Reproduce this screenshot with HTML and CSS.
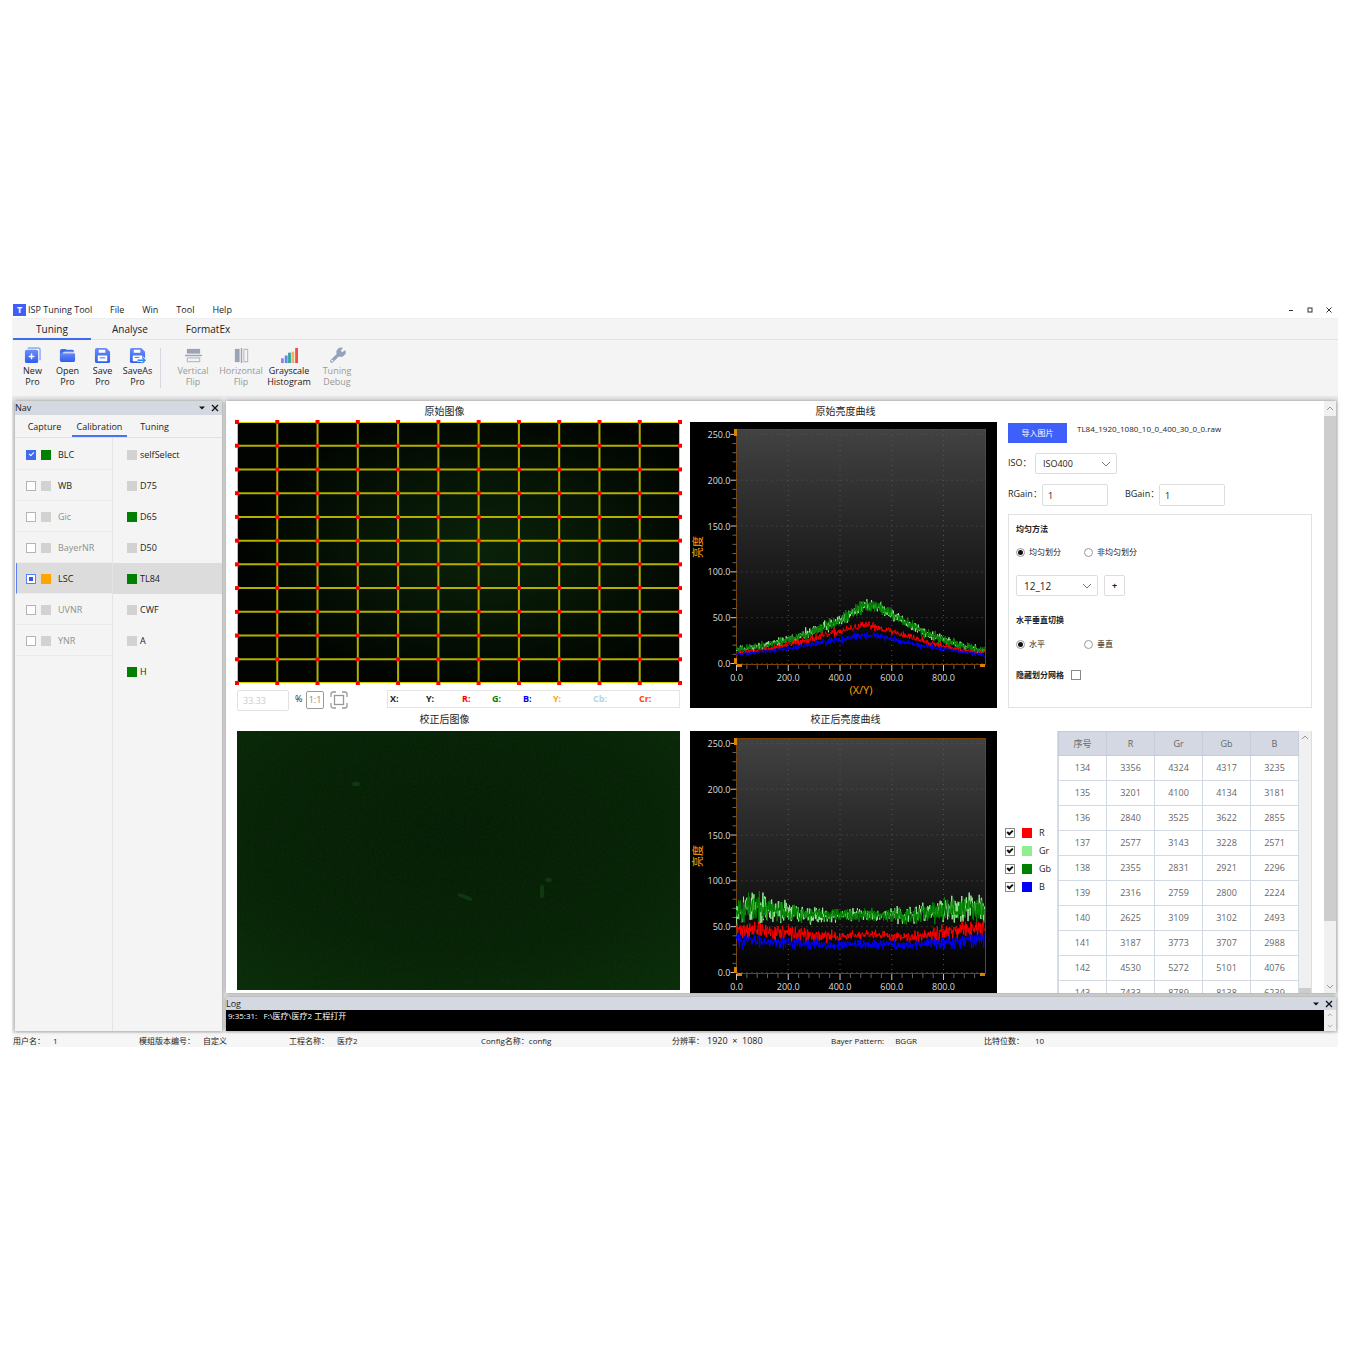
FILE: index.html
```html
<!DOCTYPE html>
<html lang="zh-CN">
<head>
<meta charset="utf-8">
<title>ISP Tuning Tool</title>
<link rel="stylesheet" href="styles.css">
</head>
<body>
<div class="app">
  <header class="titlebar">
    <span class="logo">T</span>
    <span class="app-name">ISP Tuning Tool</span>
    <nav class="menu">
      <a href="#file">File</a><a href="#win">Win</a><a href="#tool">Tool</a><a href="#help">Help</a>
    </nav>
    <div class="window-controls">
      <button type="button" aria-label="Minimize"><svg width="8" height="8" viewBox="0 0 8 8"><path d="M2 4.500h4" stroke="#333"/></svg></button>
      <button type="button" aria-label="Maximize"><svg width="8" height="8" viewBox="0 0 8 8"><rect x="2" y="2" width="4" height="4" fill="none" stroke="#333"/></svg></button>
      <button type="button" aria-label="Close"><svg width="8" height="8" viewBox="0 0 8 8"><path d="M1.500 1.500l5 5M6.500 1.500l-5 5" stroke="#333"/></svg></button>
    </div>
  </header>

  <nav class="ribbon-tabs">
    <a href="#tuning" class="active">Tuning</a><a href="#analyse">Analyse</a><a href="#formatex">FormatEx</a>
  </nav>

  <div class="toolbar">
    <button type="button" class="tool">
      <svg viewBox="0 0 18 18"><defs><linearGradient id="btn-fill" x1="0" x2="0" y1="0" y2="1"><stop offset="0" stop-color="#6a8ef6"/><stop offset="1" stop-color="#2f5cee"/></linearGradient></defs><path d="M4 1h11a2 2 0 0 1 2 2v11" fill="none" stroke="#8ea7f8" stroke-width="1.500"/><rect x="1" y="3" width="14" height="14" rx="2" fill="url(#btn-fill)"/><path d="M8 7v6M5 10h6" stroke="#fff" stroke-width="1.500"/></svg>
      New<br>Pro</button>
    <button type="button" class="tool">
      <svg viewBox="0 0 18 18"><path d="M1 14V4a2 2 0 0 1 2-2h4l1 1h6a2 2 0 0 1 2 2H6a2 2 0 0 0-2 2v8z" fill="#3f6bf0"/><path d="M5 6h10a2 2 0 0 1 2 2v6a2 2 0 0 1-2 2H3a2 2 0 0 1-2-2V9a3 3 0 0 1 4-3z" fill="url(#btn-fill)"/><path d="M4 6.500h12" stroke="#b9c9fb"/></svg>
      Open<br>Pro</button>
    <button type="button" class="tool">
      <svg viewBox="0 0 18 18"><path d="M3 1h10l4 4v10a2 2 0 0 1-2 2H3a2 2 0 0 1-2-2V3a2 2 0 0 1 2-2z" fill="url(#btn-fill)"/><path d="M5 3h7v3H5zM4 9h10v6H4z" fill="#fff"/><path d="M6 11.500h6" stroke="#3f6bf0"/></svg>
      Save<br>Pro</button>
    <button type="button" class="tool">
      <svg viewBox="0 0 18 18"><path d="M3 1h10l4 4v10a2 2 0 0 1-2 2H3a2 2 0 0 1-2-2V3a2 2 0 0 1 2-2z" fill="url(#btn-fill)"/><path d="M5 3h7v3H5zM4 9h10v6H4z" fill="#fff"/><path d="M6 11h5" stroke="#3f6bf0"/><path d="M9 14h8M14 11l3 3-3 3" fill="none" stroke="#f4f4f4" stroke-width="3"/><path d="M9 14h8M14 11l3 3-3 3" fill="none" stroke="#2e8bea" stroke-width="1.500"/></svg>
      SaveAs<br>Pro</button>
    <span class="divider"></span>
    <button type="button" class="tool wide" disabled>
      <svg viewBox="0 0 18 18"><path d="M2 2h14v5H2z" fill="#9aa4b5"/><path d="M0 9h18" stroke="#9aa4b5" stroke-width="1.500"/><path d="M2.500 11.500h13v4h-13z" fill="none" stroke="#b6bdca" stroke-width="1.200"/></svg>
      Vertical<br>Flip</button>
    <button type="button" class="tool wide" disabled>
      <svg viewBox="0 0 18 18"><path d="M2 2h5v14H2z" fill="#9aa4b5"/><path d="M9 1v16" stroke="#9aa4b5" stroke-width="1.500"/><path d="M11.500 2.500h4v13h-4z" fill="none" stroke="#b6bdca" stroke-width="1.200"/></svg>
      Horizontal<br>Flip</button>
    <button type="button" class="tool wide">
      <svg viewBox="0 0 18 18"><path d="M0 12h3v5H0z" fill="#a07be8"/><path d="M4 9h3v8H4z" fill="#5b8de8"/><path d="M7.500 6h3v11h-3z" fill="#2fa79c"/><path d="M11 5h3v12h-3z" fill="#f5b060"/><path d="M15 1h3v16h-3z" fill="#f0504a"/></svg>
      Grayscale<br>Histogram</button>
    <button type="button" class="tool wide" disabled>
      <svg viewBox="0 0 18 18"><path d="M3 15l8-8" stroke="#93a2ba" stroke-width="3.500" stroke-linecap="round"/><path d="M14 1l-2 3 2 2 3-2a4.500 4.500 0 1 1-4-3z" fill="#93a2ba" stroke="#93a2ba"/><circle cx="3.500" cy="14.500" r="1" fill="#f4f4f4"/></svg>
      Tuning<br>Debug</button>
  </div>

  <div class="workspace">
    <aside class="nav-panel">
      <div class="panel-head"><span>Nav</span>
        <div class="panel-actions">
          <button type="button" aria-label="Panel options"><svg width="8" height="8" viewBox="0 0 8 8"><path d="M1 2.500h6l-3 3z" fill="#111"/></svg></button>
          <button type="button" aria-label="Close panel"><svg width="8" height="8" viewBox="0 0 8 8"><path d="M1 1l6 6M7 1l-6 6" stroke="#111" stroke-width="1.300"/></svg></button>
        </div>
      </div>
      <nav class="nav-tabs"><a href="#capture">Capture</a><a href="#calibration" class="active">Calibration</a><a href="#nav-tuning">Tuning</a></nav>
      <div class="nav-lists">
        <ul class="modules">
          <li><label><input type="checkbox" class="check blue" checked><i class="swatch green"></i>BLC</label></li>
          <li><label><input type="checkbox" class="check"><i class="swatch"></i>WB</label></li>
          <li class="muted"><label><input type="checkbox" class="check"><i class="swatch"></i>Gic</label></li>
          <li class="muted"><label><input type="checkbox" class="check"><i class="swatch"></i>BayerNR</label></li>
          <li class="selected"><label><input type="checkbox" class="check partial"><i class="swatch orange"></i>LSC</label></li>
          <li class="muted"><label><input type="checkbox" class="check"><i class="swatch"></i>UVNR</label></li>
          <li class="muted"><label><input type="checkbox" class="check"><i class="swatch"></i>YNR</label></li>
        </ul>
        <ul class="lights">
          <li><i class="swatch"></i>selfSelect</li>
          <li><i class="swatch"></i>D75</li>
          <li><i class="swatch green"></i>D65</li>
          <li><i class="swatch"></i>D50</li>
          <li class="selected"><i class="swatch green"></i>TL84</li>
          <li><i class="swatch"></i>CWF</li>
          <li><i class="swatch"></i>A</li>
          <li><i class="swatch green"></i>H</li>
        </ul>
      </div>
    </aside>

    <div class="center">
      <main class="main-panel">
        <div class="content">
          <section class="cell image-cell">
            <h2>原始图像</h2>
            <svg class="picture" id="mesh" viewBox="0 0 443 261">
              <defs><radialGradient id="glow" cx="0.560" cy="0.480" r="0.550"><stop offset="0" stop-color="#0a2209"/><stop offset="0.500" stop-color="#061506"/><stop offset="1" stop-color="#010401"/></radialGradient></defs>
              <rect width="443" height="261" fill="url(#glow)"/>
            </svg>
            <div class="image-tools">
              <input class="zoom-box" type="text" value="33.33" aria-label="Zoom" disabled><span class="percent">%</span>
              <button type="button" class="icon-btn ratio" aria-label="Actual size">1:1</button>
              <button type="button" class="icon-btn" aria-label="Fit"><svg width="18" height="18" viewBox="0 0 18 18" fill="none" stroke="#999" stroke-width="1.300"><path d="M1 6V3a2 2 0 0 1 2-2h3M12 1h3a2 2 0 0 1 2 2v3M17 12v3a2 2 0 0 1-2 2h-3M6 17H3a2 2 0 0 1-2-2v-3"/><rect x="4.500" y="4.500" width="9" height="9"/></svg></button>
              <div class="readout"><b>X:</b><b>Y:</b><b class="c-red">R:</b><b class="c-green">G:</b><b class="c-blue">B:</b><b class="c-orange">Y:</b><b class="c-cb">Cb:</b><b class="c-cr">Cr:</b></div>
            </div>
          </section>
          <section class="cell chart-cell"><h2>原始亮度曲线</h2><svg class="chart" id="chart-raw" viewBox="0 0 307 286"></svg></section>
          <section class="cell form">
            <div class="row import"><button type="button" class="primary">导入图片</button><span>TL84_1920_1080_10_0_400_30_0_0.raw</span></div>
            <div class="row iso"><label for="iso">ISO：</label><span class="select"><select id="iso"><option>ISO400</option></select><svg width="10" height="6" viewBox="0 0 10 6"><path d="M1 1l4 4 4-4" fill="none" stroke="#777"/></svg></span></div>
            <div class="row gains"><label for="rgain">RGain：</label><input id="rgain" type="text" value="1"><label for="bgain">BGain：</label><input id="bgain" type="text" value="1"></div>
            <div class="options">
              <h3>均匀方法</h3>
              <div class="radios"><label><input type="radio" name="method" checked>均匀划分</label><label><input type="radio" name="method">非均匀划分</label></div>
              <div class="row size"><span class="select large"><select aria-label="Grid size"><option>12_12</option></select><svg width="10" height="6" viewBox="0 0 10 6"><path d="M1 1l4 4 4-4" fill="none" stroke="#777"/></svg></span><button type="button" class="plus">+</button></div>
              <h3>水平垂直切换</h3>
              <div class="radios"><label><input type="radio" name="axis" checked>水平</label><label><input type="radio" name="axis">垂直</label></div>
              <label class="hide-grid">隐藏划分网格<input type="checkbox" class="check dark"></label>
            </div>
          </section>

          <section class="cell image-cell second">
            <h2>校正后图像</h2>
            <svg class="picture" viewBox="0 0 443 259">
              <defs>
                <radialGradient id="flat" cx="0.500" cy="0.400" r="0.750"><stop offset="0" stop-color="#071b07"/><stop offset="0.600" stop-color="#092008"/><stop offset="1" stop-color="#0c2a0b"/></radialGradient>
                <filter id="grain" x="0" y="0" width="1" height="1"><feTurbulence type="fractalNoise" baseFrequency="0.400" numOctaves="2" seed="4"/><feColorMatrix values="0 0 0 0 0  0 0 0 0 0.100  0 0 0 0 0  0.500 0 0 0 -0.100"/></filter>
              </defs>
              <rect width="443" height="259" fill="url(#flat)"/>
              <rect width="443" height="259" filter="url(#grain)" opacity="0.500"/>
              <path d="M305 156v9M310 149h3M223 164l10 4M117 53h4" fill="none" stroke="#1c5a1e" stroke-width="4" stroke-linecap="round" opacity="0.400"/>
            </svg>
          </section>
          <section class="cell chart-cell second"><h2>校正后亮度曲线</h2><svg class="chart" id="chart-fixed" viewBox="0 0 307 286"></svg></section>
          <section class="cell second data">
            <div class="legend">
              <label><input type="checkbox" class="check tick" checked><i class="swatch red"></i>R</label>
              <label><input type="checkbox" class="check tick" checked><i class="swatch light"></i>Gr</label>
              <label><input type="checkbox" class="check tick" checked><i class="swatch green"></i>Gb</label>
              <label><input type="checkbox" class="check tick" checked><i class="swatch blue"></i>B</label>
            </div>
            <div class="table-wrap">
              <div class="table-box">
              <table>
                <thead><tr><th>序号</th><th>R</th><th>Gr</th><th>Gb</th><th>B</th></tr></thead>
                <tbody>
                  <tr><td>134</td><td>3356</td><td>4324</td><td>4317</td><td>3235</td></tr>
                  <tr><td>135</td><td>3201</td><td>4100</td><td>4134</td><td>3181</td></tr>
                  <tr><td>136</td><td>2840</td><td>3525</td><td>3622</td><td>2855</td></tr>
                  <tr><td>137</td><td>2577</td><td>3143</td><td>3228</td><td>2571</td></tr>
                  <tr><td>138</td><td>2355</td><td>2831</td><td>2921</td><td>2296</td></tr>
                  <tr><td>139</td><td>2316</td><td>2759</td><td>2800</td><td>2224</td></tr>
                  <tr><td>140</td><td>2625</td><td>3109</td><td>3102</td><td>2493</td></tr>
                  <tr><td>141</td><td>3187</td><td>3773</td><td>3707</td><td>2988</td></tr>
                  <tr><td>142</td><td>4530</td><td>5272</td><td>5101</td><td>4076</td></tr>
                  <tr><td>143</td><td>7433</td><td>8789</td><td>8138</td><td>6239</td></tr>
                </tbody>
              </table>
              </div>
              <div class="bar table-bar"><svg width="8" height="5" viewBox="0 0 8 5"><path d="M1 4l3-3 3 3" fill="none" stroke="#999"/></svg><i class="thumb"></i></div>
            </div>
          </section>
        </div>
        <div class="bar main-bar"><svg width="8" height="5" viewBox="0 0 8 5"><path d="M1 4l3-3 3 3" fill="none" stroke="#999"/></svg><i class="thumb"></i><svg width="8" height="5" viewBox="0 0 8 5"><path d="M1 1l3 3 3-3" fill="none" stroke="#999"/></svg></div>
      </main>
      <section class="log-panel">
        <div class="panel-head"><span>Log</span>
          <div class="panel-actions">
            <button type="button" aria-label="Log options"><svg width="8" height="8" viewBox="0 0 8 8"><path d="M1 2.500h6l-3 3z" fill="#111"/></svg></button>
            <button type="button" aria-label="Close log"><svg width="8" height="8" viewBox="0 0 8 8"><path d="M1 1l6 6M7 1l-6 6" stroke="#111" stroke-width="1.300"/></svg></button>
          </div>
        </div>
        <div class="log-body"><p>9:35:31:&nbsp;&nbsp; F:\医疗\医疗2 工程打开</p><div class="bar log-bar"><svg width="6" height="4" viewBox="0 0 8 5"><path d="M1 4l3-3 3 3" fill="none" stroke="#999"/></svg><svg width="6" height="4" viewBox="0 0 8 5"><path d="M1 1l3 3 3-3" fill="none" stroke="#999"/></svg></div></div>
      </section>
    </div>
  </div>

  <footer class="statusbar">
    <span>用户名：<em>1</em></span>
    <span>模组版本编号：<em>自定义</em></span>
    <span>工程名称：<em>医疗2</em></span>
    <span>Config名称：config</span>
    <span>分辨率：<em class="dims">1920&nbsp; ×&nbsp; 1080</em></span>
    <span>Bayer Pattern:<em class="far">BGGR</em></span>
    <span>比特位数：<em class="far">10</em></span>
  </footer>
</div>
<script src="app.js"></script>
</body>
</html>
```
FILE: styles.css
```css
* { box-sizing: border-box; }

body {
  margin: 0;
  padding: 302px 12px;
  background: #fff;
  color: #222;
  font: 9px/12px "Open Sans", "Noto Sans CJK SC", sans-serif;
}

h2, h3, p, ul { margin: 0; padding: 0; }
ul { list-style: none; }
a { color: inherit; text-decoration: none; }
button, input, select { font: inherit; color: inherit; margin: 0; }
button { padding: 0; border: 0; background: none; }
svg { display: block; }

/* title bar and menus */
.titlebar { display: flex; align-items: center; height: 16px; padding-left: 1px; }
.logo { width: 13px; height: 12px; background: #3f5ffb; color: #fff; font-weight: 700; text-align: center; }
.app-name { width: 84px; padding-left: 2px; }
.menu { display: flex; gap: 18px; flex: 1; }
.window-controls { display: flex; gap: 11px; padding-right: 5px; }

.ribbon-tabs { display: flex; height: 22px; padding-left: 1px; background: #f4f4f4; border-top: 1px solid #eee; border-bottom: 1px solid #e2e2e2; font-size: 10px; line-height: 20px; }
.ribbon-tabs a { width: 78px; height: 21px; text-align: center; }
.ribbon-tabs .active { border-bottom: 2px solid #3f6bf0; }

.toolbar { display: flex; height: 56px; padding: 6px 0 0 3px; background: #f4f4f4; }
.tool { width: 35px; height: 42px; line-height: 11px; text-align: center; }
.tool svg { width: 17px; height: 17px; margin: 0 auto 1px; }
.tool.wide { width: 48px; }
.tool:disabled { color: #999; }
.divider { width: 1px; height: 40px; margin: 2px 8px 0 5px; background: #d4d8df; }

/* workspace */
.workspace { display: flex; gap: 4px; padding: 5px 2px 2px 3px; background: #e8e8e8; }
.nav-panel, .main-panel, .log-panel { box-shadow: 0 0 4px rgba(0, 0, 0, .4); }
.nav-panel { width: 207px; background: #f4f4f4; }
.center { flex: 1; min-width: 0; display: flex; flex-direction: column; gap: 4px; }

.panel-head { display: flex; justify-content: space-between; align-items: center; height: 14px; background: #d3d8e1; }
.panel-actions { display: flex; gap: 5px; padding-right: 3px; }

.nav-tabs { display: flex; height: 23px; padding-left: 2px; border-bottom: 1px solid #e2e2e2; line-height: 23px; text-align: center; }
.nav-tabs a { width: 55px; height: 22px; }
.nav-tabs .active { border-bottom: 2px solid #4a72f0; }

.nav-lists { display: flex; height: 593px; }
.modules { width: 98px; padding: 1px 0 0 1px; border-right: 1px solid #e4e4e4; }
.modules li { height: 31px; padding-left: 10px; border-bottom: 1px solid #ebebeb; }
.modules label { display: flex; align-items: center; height: 31px; }
.modules .swatch { margin: 0 7px 0 5px; }
.modules .selected { padding-left: 9px; border-left: 1px solid #5b7df5; }
.muted { color: #909090; }
.lights { flex: 1; padding-top: 1px; }
.lights li { display: flex; align-items: center; gap: 3px; height: 31px; padding-left: 14px; }
.selected { background: #dcdcdc; }

.swatch { width: 10px; height: 10px; background: #d2d2d2; }
.green { background: #008000; }
.orange { background: #ffa500; }
.red { background: #f00; }
.light { background: #90ee90; }
.blue.swatch { background: #00f; }

.check { appearance: none; display: grid; place-items: center; width: 10px; height: 10px; border: 1px solid #b5b5b5; background: #fff; }
.check.blue { background: #3f6bf0; border-color: #3f6bf0; }
.check.partial { border-color: #5b7df5; }
.check.partial::before { content: ""; width: 4px; height: 4px; background: #2f55f0; }
.check.blue::before, .check.tick::before { content: ""; width: 2px; height: 4px; margin-bottom: 2px; border: solid #fff; border-width: 0 1px 1px 0; transform: rotate(45deg); }
.check.tick { border-color: #888; }
.check.tick::before { border-color: #111; border-width: 0 2px 2px 0; }
.check.dark { border-color: #888; }

/* main panel */
.main-panel { display: flex; height: 592px; background: #fff; }
.content { flex: 1; min-width: 0; display: grid; grid-template-columns: 445fr 307fr 307fr; grid-template-rows: 307px 309px; column-gap: 8px; padding: 0 12px 0 11px; overflow: hidden; }
.cell { min-width: 0; }
h2 { height: 21px; font-size: 10px; font-weight: 400; line-height: 20px; text-align: center; }
.second h2 { height: 23px; line-height: 22px; }
.image-cell { padding-right: 2px; }
.image-cell h2 { padding-right: 28px; }
.chart-cell h2 { padding-left: 4px; }
.picture { width: 100%; height: auto; overflow: visible; }
.chart { width: 100%; height: auto; background: #000; }

.image-tools { display: flex; align-items: flex-start; padding-top: 7px; }
.zoom-box { width: 52px; height: 21px; padding: 0 5px; border: 1px solid #e2e2e2; border-radius: 2px; background: #fff; color: #ccc; }
.percent { width: 17px; padding-left: 6px; line-height: 18px; }
.icon-btn { width: 18px; height: 18px; margin: 1px 6px 0 0; }
.ratio { border: 1px solid #999; border-radius: 2px; color: #888; line-height: 16px; }
.readout { flex: 1; display: grid; grid-template-columns: 36fr 36fr 30fr 31fr 30fr 40fr 46fr 40fr; height: 18px; margin-left: 33px; padding-left: 2px; border: 1px solid #e4e4e4; line-height: 16px; }
.c-red { color: #f00; } .c-green { color: #008000; } .c-blue { color: #00f; }
.c-orange { color: #ffa500; } .c-cb { color: #add8e6; } .c-cr { color: #ff4500; }

/* settings form */
.form { display: flex; flex-direction: column; padding: 22px 0 0 3px; }
.row { display: flex; align-items: flex-start; }
.primary { width: 59px; height: 20px; background: #3f5ffb; color: #fff; font-size: 8px; }
.import { gap: 10px; height: 30px; }
.import span { font-size: 8px; line-height: 11px; }
.iso { height: 31px; }
.iso label { width: 27px; line-height: 20px; }
.gains { height: 30px; }
.gains label { width: 34px; line-height: 20px; }
.gains input { width: 66px; height: 22px; padding: 0 5px; border: 1px solid #ddd; border-radius: 2px; }
.gains input:first-of-type { margin-right: 17px; }
.select { position: relative; width: 82px; height: 21px; }
.select select { appearance: none; width: 100%; height: 100%; padding: 0 7px; border: 1px solid #ddd; border-radius: 2px; background: #fff; }
.select svg { position: absolute; right: 6px; top: 8px; }
.select.large { font-size: 10px; }
.plus { width: 21px; height: 21px; margin-left: 6px; border: 1px solid #ddd; border-radius: 2px; font-size: 9px; font-weight: 700; }
.options { flex: 1; padding: 7px; border: 1px solid #e2e2e2; font-size: 8px; }
h3 { font-size: 8px; line-height: 13px; }
.radios { display: flex; margin-top: 11px; }
.radios label { display: flex; align-items: center; gap: 4px; width: 68px; white-space: nowrap; }
.radios input { appearance: none; display: grid; place-items: center; flex: none; width: 9px; height: 9px; border: 1px solid #999; border-radius: 50%; }
.radios input:checked::before { content: ""; width: 5px; height: 5px; border-radius: 50%; background: #111; }
.size { margin: 17px 0; }
.size + h3 + .radios { margin-top: 12px; }
.hide-grid { display: flex; align-items: center; gap: 7px; margin-top: 19px; font-weight: 700; }

/* legend and coefficients */
.data { display: flex; padding-top: 23px; }
.legend { width: 52px; padding-top: 93px; }
.legend label { display: flex; align-items: center; height: 18px; }
.legend .swatch { margin: 0 7px; }
.table-wrap { flex: 1; display: flex; align-items: flex-start; border: solid #d9dee8; border-width: 0 1px; }
.table-box { flex: 1; }
table { width: 100%; border-collapse: collapse; table-layout: fixed; color: #666; text-align: center; }
th, td { height: 25px; padding: 0; border: 1px solid #d3dae4; font-weight: 400; }
th { height: 24px; background: #d3d8e3; border-color: #c6cdda; }

.bar { display: flex; flex-direction: column; align-items: center; background: #f0f0f0; }
.bar .thumb { width: 100%; background: #cdcdcd; }
.table-bar { width: 12px; height: 286px; padding-top: 4px; }
.table-bar .thumb { flex: 1; margin-top: 248px; }
.main-bar { width: 12px; padding: 5px 0 4px; }
.main-bar .thumb { height: 505px; margin: 5px 0 auto; }

/* log */
.log-panel .panel-head { height: 13px; }
.log-body { display: flex; height: 21px; background: #000; color: #fff; }
.log-body p { flex: 1; padding-left: 2px; font-size: 8px; line-height: 12px; }
.log-bar { width: 12px; justify-content: space-between; padding: 3px 0; }

.statusbar { display: grid; grid-template-columns: 126fr 150fr 192fr 191fr 159fr 153fr 354fr; height: 14px; padding: 2px 0 0 1px; background: #f6f6f6; font-size: 8px; white-space: nowrap; }
.statusbar em { margin-left: 8px; font-style: normal; }
.statusbar .far { margin-left: 11px; }
.statusbar .dims { margin-left: 3px; font-size: 9px; }

/* drawings */
.mesh-line { stroke: #b4b000; stroke-width: 2; }
.mesh-edge { fill: none; stroke: #d8d400; }
.axis-text { fill: #ddd; font-size: 9px; }
.axis-name { fill: #ffa500; font-size: 11px; text-anchor: middle; }
```
FILE: app.js
```js
const NS = "http://www.w3.org/2000/svg";

function add(parent, name, attrs, text) {
  const el = document.createElementNS(NS, name);
  for (const key in attrs) el.setAttribute(key, attrs[key]);
  if (text) el.textContent = text;
  parent.appendChild(el);
  return el;
}

function randomFrom(seed) {
  return () => {
    seed = (seed * 1664525 + 1013904223) % 4294967296;
    return seed / 4294967296;
  };
}

// Mesh of 11 x 11 blocks over the raw picture
function drawMesh(svg) {
  const n = 11, w = 443, h = 261;
  const xs = [], ys = [];
  for (let i = 0; i <= n; i++) { xs.push(w * i / n); ys.push(h * i / n); }
  for (let i = 1; i < n; i++) {
    add(svg, "line", { class: "mesh-line", x1: xs[i], x2: xs[i], y1: 0, y2: h });
    add(svg, "line", { class: "mesh-line", x1: 0, x2: w, y1: ys[i], y2: ys[i] });
  }
  add(svg, "rect", { class: "mesh-edge", x: 0.5, y: 0.5, width: w - 1, height: h - 1 });
  for (const x of xs) for (const y of ys) add(svg, "rect", { x: x - 2, y: y - 2, width: 4, height: 4, fill: "#f00" });
}

const X0 = 46.5, Y0 = 241.5;
const px = v => X0 + v * 0.2588;
const py = v => Y0 - v * 0.9165;

function valueAt(knots, x) {
  const step = 960 / (knots.length - 1);
  const i = Math.min(knots.length - 2, Math.floor(x / step));
  const t = x / step - i;
  return knots[i] * (1 - t) + knots[i + 1] * t;
}

function drawChart(svg, id, series, xName) {
  const defs = add(svg, "defs", {});
  const grad = add(defs, "linearGradient", { id, x1: 0, x2: 0, y1: 0, y2: 1 });
  add(grad, "stop", { offset: 0, "stop-color": "#424242" });
  add(grad, "stop", { offset: 1, "stop-color": "#000" });
  add(svg, "rect", { x: X0, y: 7.5, width: 249, height: 235, fill: `url(#${id})`, stroke: "#7a4000" });

  for (let v = 0; v <= 250; v += 10) {
    const major = v % 50 === 0, y = py(v);
    add(svg, "line", { x1: X0 - (major ? 6 : 4), x2: X0, y1: y, y2: y, stroke: major ? "#ccc" : "#666" });
    if (major) {
      add(svg, "line", { x1: X0, x2: 295, y1: y, y2: y, stroke: "#555", "stroke-dasharray": "1 4" });
      add(svg, "text", { class: "axis-text", x: X0 - 6, y: y + 3.5, "text-anchor": "end" }, v.toFixed(1));
    }
  }
  for (let v = 0; v <= 920; v += 40) {
    const major = v % 200 === 0, x = px(v);
    add(svg, "line", { x1: x, x2: x, y1: 243, y2: major ? 249 : 247, stroke: major ? "#ccc" : "#666" });
    if (major) {
      add(svg, "line", { x1: x, x2: x, y1: 8, y2: 242, stroke: "#555", "stroke-dasharray": "1 4" });
      add(svg, "text", { class: "axis-text", x, y: 259, "text-anchor": "middle" }, v.toFixed(1));
    }
  }
  for (const [x, y, width, height] of [[44, 7, 3, 7], [44, 236, 3, 6], [47, 242, 5, 3], [290, 242, 5, 3]])
    add(svg, "rect", { x, y, width, height, fill: "#e08000" });

  for (const s of series) {
    const rnd = randomFrom(s.seed);
    let points = "";
    for (let v = 0; v <= 960; v += 1.6) {
      const noise = rnd() + rnd() + rnd() - 1.5;
      const y = valueAt(s.knots, v) + noise * valueAt(s.noise, v);
      points += `${px(v).toFixed(1)},${py(y).toFixed(1)} `;
    }
    add(svg, "polyline", { points, fill: "none", stroke: s.color, "stroke-width": 1 });
  }

  if (xName) add(svg, "text", { class: "axis-name", x: 171, y: 272 }, xName);
  add(svg, "text", { class: "axis-name", transform: "translate(12 125) rotate(-90)" }, "亮度");
}

const green = [16, 17, 19, 22, 25, 29, 33, 39, 45, 52, 61, 64, 58, 50, 42, 35, 29, 24, 20, 17, 14];
const red = [12, 13, 15, 17, 20, 23, 27, 30, 34, 37, 41, 41, 37, 33, 29, 25, 22, 18, 15, 13, 12];
const blue = [10, 11, 13, 14, 16, 18, 21, 23, 25, 27, 31, 31, 28, 25, 22, 19, 17, 15, 13, 11, 9];

drawMesh(document.getElementById("mesh"));
drawChart(document.getElementById("chart-raw"), "bg-raw", [
  { color: "#90ee90", seed: 11, knots: green, noise: [3, 4, 5, 6, 7, 6, 6, 6, 5, 4, 4] },
  { color: "#008000", seed: 23, knots: green, noise: [4, 4, 5, 6, 6, 8, 7, 6, 6, 4, 4] },
  { color: "#ff0000", seed: 37, knots: red, noise: [2, 2, 4, 4, 4, 4, 4, 4, 4, 2, 2] },
  { color: "#0000ff", seed: 41, knots: blue, noise: [2, 2, 3, 3, 4, 4, 3, 3, 3, 2, 2] }
], "(X/Y)");
drawChart(document.getElementById("chart-fixed"), "bg-fixed", [
  { color: "#90ee90", seed: 53, knots: [71, 70, 66, 63, 62, 64, 63, 63, 66, 69, 71], noise: [19, 14, 13, 9, 7, 6, 7, 8, 11, 16, 20] },
  { color: "#008000", seed: 67, knots: [71, 70, 67, 63, 62, 64, 63, 63, 66, 69, 71], noise: [15, 14, 12, 8, 7, 6, 7, 8, 12, 14, 16] },
  { color: "#ff0000", seed: 71, knots: [47, 46, 43, 40, 39, 41, 40, 39, 43, 45, 48], noise: [9, 9, 8, 7, 5, 5, 5, 6, 8, 9, 9] },
  { color: "#0000ff", seed: 83, knots: [35, 35, 33, 31, 29, 31, 30, 30, 33, 34, 37], noise: [8, 7, 6, 6, 5, 5, 5, 5, 6, 8, 8] }
]);
```
